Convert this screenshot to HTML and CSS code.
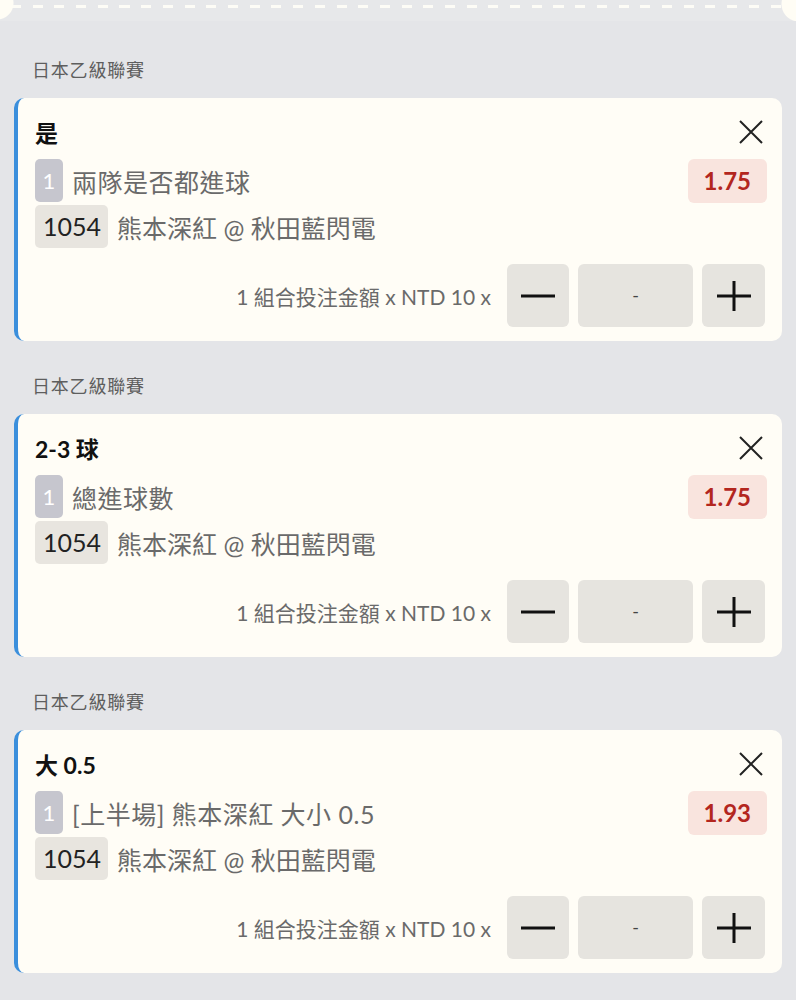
FILE: index.html
```html
<!DOCTYPE html>
<html lang="zh-Hant">
<head>
    <meta charset="UTF-8">
    <title>投注單</title>
    <link rel="stylesheet" href="styles.css">
</head>
<body>
    <div class="ticket-edge"></div>
    <div class="slip">
        <div class="group">
            <div class="league">日本乙級聯賽</div>
            <div class="card">
                <div class="card-head">
                    <span class="pick">是</span>
                    <button class="close">
                        <svg width="24" height="24" viewBox="0 0 24 24"><path d="M1 1 L23 23 M23 1 L1 23" stroke="#222" stroke-width="2" fill="none"/></svg>
                    </button>
                </div>
                <div class="row">
                    <span class="num">1</span>
                    <span class="desc market">兩隊是否都進球</span>
                    <span class="odds">1.75</span>
                </div>
                <div class="row">
                    <span class="code">1054</span>
                    <span class="desc">熊本深紅 @ 秋田藍閃電</span>
                </div>
                <div class="stake">
                    <span class="stake-text">1 組合投注金額 x NTD 10 x</span>
                    <button class="step minus">
                        <svg width="34" height="34" viewBox="0 0 34 34"><path d="M0 17 H34" stroke="#111" stroke-width="3" fill="none"/></svg>
                    </button>
                    <div class="amount">-</div>
                    <button class="step plus">
                        <svg width="34" height="34" viewBox="0 0 34 34"><path d="M0 17 H34 M17 2 V32" stroke="#111" stroke-width="3" fill="none"/></svg>
                    </button>
                </div>
            </div>
        </div>

        <div class="group">
            <div class="league">日本乙級聯賽</div>
            <div class="card">
                <div class="card-head">
                    <span class="pick">2-3 球</span>
                    <button class="close">
                        <svg width="24" height="24" viewBox="0 0 24 24"><path d="M1 1 L23 23 M23 1 L1 23" stroke="#222" stroke-width="2" fill="none"/></svg>
                    </button>
                </div>
                <div class="row">
                    <span class="num">1</span>
                    <span class="desc market">總進球數</span>
                    <span class="odds">1.75</span>
                </div>
                <div class="row">
                    <span class="code">1054</span>
                    <span class="desc">熊本深紅 @ 秋田藍閃電</span>
                </div>
                <div class="stake">
                    <span class="stake-text">1 組合投注金額 x NTD 10 x</span>
                    <button class="step minus">
                        <svg width="34" height="34" viewBox="0 0 34 34"><path d="M0 17 H34" stroke="#111" stroke-width="3" fill="none"/></svg>
                    </button>
                    <div class="amount">-</div>
                    <button class="step plus">
                        <svg width="34" height="34" viewBox="0 0 34 34"><path d="M0 17 H34 M17 2 V32" stroke="#111" stroke-width="3" fill="none"/></svg>
                    </button>
                </div>
            </div>
        </div>

        <div class="group">
            <div class="league">日本乙級聯賽</div>
            <div class="card">
                <div class="card-head">
                    <span class="pick">大 0.5</span>
                    <button class="close">
                        <svg width="24" height="24" viewBox="0 0 24 24"><path d="M1 1 L23 23 M23 1 L1 23" stroke="#222" stroke-width="2" fill="none"/></svg>
                    </button>
                </div>
                <div class="row">
                    <span class="num">1</span>
                    <span class="desc market">[上半場] 熊本深紅 大小 0.5</span>
                    <span class="odds">1.93</span>
                </div>
                <div class="row">
                    <span class="code">1054</span>
                    <span class="desc">熊本深紅 @ 秋田藍閃電</span>
                </div>
                <div class="stake">
                    <span class="stake-text">1 組合投注金額 x NTD 10 x</span>
                    <button class="step minus">
                        <svg width="34" height="34" viewBox="0 0 34 34"><path d="M0 17 H34" stroke="#111" stroke-width="3" fill="none"/></svg>
                    </button>
                    <div class="amount">-</div>
                    <button class="step plus">
                        <svg width="34" height="34" viewBox="0 0 34 34"><path d="M0 17 H34 M17 2 V32" stroke="#111" stroke-width="3" fill="none"/></svg>
                    </button>
                </div>
            </div>
        </div>
    </div>
</body>
</html>
```

FILE: styles.css
```css
body {
    margin: 0;
    background-color: #e4e5e8;
    font-family: Lato, "Noto Sans CJK TC", sans-serif;
    color: #6a6a6a;
}

/* torn ticket edge at the top, with the two notches */
.ticket-edge {
    height: 21px;
    background:
        radial-gradient(circle at -3px 3px, #fffdf5 16px, transparent 17px),
        radial-gradient(circle at 799px 4px, #fffdf5 17px, transparent 18px),
        repeating-linear-gradient(to right, #fdfcf6 0, #fdfcf6 10px, transparent 10px, transparent 21.7px) 11px 5px / 100% 3px no-repeat,
        #e7e8ea;
}

.slip {
    padding: 4px 14px 20px;
}

.group {
    padding-top: 33px;
}

.league {
    font-size: 18px;
    line-height: 24px;
    color: #5e5e5e;
    padding-left: 18px;
    margin-bottom: 16px;
    letter-spacing: 0.8px;
}

.card {
    background-color: #fffdf6;
    border-left: 4px solid #3b8fdc;
    border-radius: 10px;
    padding: 14px 15px 14px 17px;
}

.card-head {
    display: flex;
    justify-content: space-between;
    align-items: center;
    height: 40px;
    margin-bottom: 7px;
}

.pick {
    font-size: 23px;
    font-weight: bold;
    color: #111;
}

.close {
    background: none;
    border: none;
    padding: 0;
    margin-right: 4px;
    width: 24px;
    height: 24px;
    cursor: pointer;
}

.close svg {
    display: block;
}

.row {
    display: flex;
    align-items: center;
    height: 43px;
    margin-bottom: 3px;
    font-size: 25px;
}

.num {
    width: 28px;
    height: 43px;
    line-height: 43px;
    text-align: center;
    background-color: #c6c6ce;
    color: #fff;
    font-size: 22px;
    border-radius: 5px;
    margin-right: 9px;
}

.code {
    height: 43px;
    line-height: 43px;
    padding: 0 7px 0 8px;
    background-color: #e8e5df;
    color: #222;
    border-radius: 5px;
    margin-right: 9px;
}

.desc {
    color: #6a6a6a;
}

.market {
    letter-spacing: 0.5px;
}

.odds {
    margin-left: auto;
    height: 44px;
    line-height: 44px;
    padding: 0 16px;
    background-color: #f9e4de;
    color: #b3261e;
    font-weight: bold;
    font-size: 24px;
    border-radius: 6px;
}

.stake {
    display: flex;
    justify-content: flex-end;
    align-items: center;
    gap: 9px;
    margin-top: 16px;
    padding-right: 2px;
}

.stake-text {
    font-size: 21px;
    color: #6a6a6a;
    margin-right: 7px;
}

.step {
    width: 62px;
    height: 63px;
    background-color: #e6e4df;
    border: none;
    border-radius: 6px;
    padding: 0;
    display: flex;
    justify-content: center;
    align-items: center;
    cursor: pointer;
}

.step.plus {
    width: 63px;
}

.amount {
    width: 115px;
    height: 63px;
    line-height: 63px;
    text-align: center;
    background-color: #e6e4df;
    border-radius: 6px;
    font-size: 18px;
    color: #444;
}
```
